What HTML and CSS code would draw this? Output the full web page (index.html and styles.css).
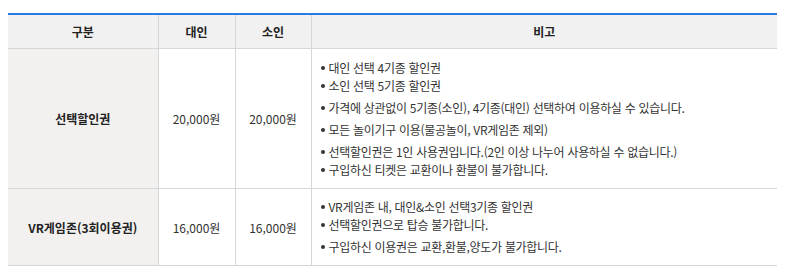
FILE: index.html
```html
<!DOCTYPE html>
<html lang="ko">
<head>
<meta charset="utf-8">
<link rel="stylesheet" href="styles.css">
</head>
<body>
<div class="wrap">
<table class="price">
  <colgroup>
    <col class="c1"><col class="c2"><col class="c3"><col class="c4">
  </colgroup>
  <thead>
    <tr><th>구분</th><th>대인</th><th>소인</th><th>비고</th></tr>
  </thead>
  <tbody>
    <tr class="r1">
      <td class="name">선택할인권</td>
      <td class="num">20,000원</td>
      <td class="num">20,000원</td>
      <td class="note">
        <ul>
          <li>대인 선택 4기종 할인권</li>
          <li>소인 선택 5기종 할인권</li>
          <li class="sp">가격에 상관없이 5기종(소인), 4기종(대인) 선택하여 이용하실 수 있습니다.</li>
          <li class="sp">모든 놀이기구 이용(물공놀이, VR게임존 제외)</li>
          <li class="sp">선택할인권은 1인 사용권입니다.(2인 이상 나누어 사용하실 수 없습니다.)</li>
          <li>구입하신 티켓은 교환이나 환불이 불가합니다.</li>
        </ul>
      </td>
    </tr>
    <tr class="r2">
      <td class="name">VR게임존(3회이용권)</td>
      <td class="num">16,000원</td>
      <td class="num">16,000원</td>
      <td class="note">
        <ul>
          <li>VR게임존 내, 대인&amp;소인 선택3기종 할인권</li>
          <li>선택할인권으로 탑승 불가합니다.</li>
          <li class="sp">구입하신 이용권은 교환,환불,양도가 불가합니다.</li>
        </ul>
      </td>
    </tr>
  </tbody>
</table>
</div>
</body>
</html>
```
FILE: styles.css
```css
html, body {
  margin: 0;
  padding: 0;
  background: #fff;
}
body {
  font-family: "Noto Sans CJK KR", "Noto Sans", sans-serif;
  font-size: 12px;
  color: #333;
}
.wrap {
  padding: 13px 0 0 8px;
}
.price {
  width: 769px;
  border-collapse: collapse;
  table-layout: fixed;
  border-top: 2px solid #2a7be4;
}
.c1 { width: 150px; }
.c2 { width: 77px; }
.c3 { width: 76px; }
.price th, .price td {
  border: 1px solid #d6d6d6;
  text-align: center;
  vertical-align: middle;
  padding: 0;
}
.price tr > :first-child { border-left: none; }
.price tr > :last-child { border-right: none; }
.price th {
  background: #f1f1f1;
  height: 33px;
  font-weight: bold;
  color: #222;
  border-top: none;
}
.price td.name {
  background: #f2f1f0;
  font-weight: bold;
  color: #222;
}
.price td.num {
  color: #333;
}
.r1 td { height: 139px; }
.r2 td { height: 76px; }
.price td.note {
  text-align: left;
  padding: 0 9px;
}
.note ul {
  list-style: none;
  margin: 0;
  padding: 0;
}
.note li {
  line-height: 18px;
  padding-left: 8px;
  position: relative;
  letter-spacing: -0.3px;
  color: #333;
}
.note li::before {
  content: "";
  position: absolute;
  left: 0;
  top: 7px;
  width: 4px;
  height: 4px;
  border-radius: 50%;
  background: #333;
}
.note li.sp { margin-top: 4px; }
```
